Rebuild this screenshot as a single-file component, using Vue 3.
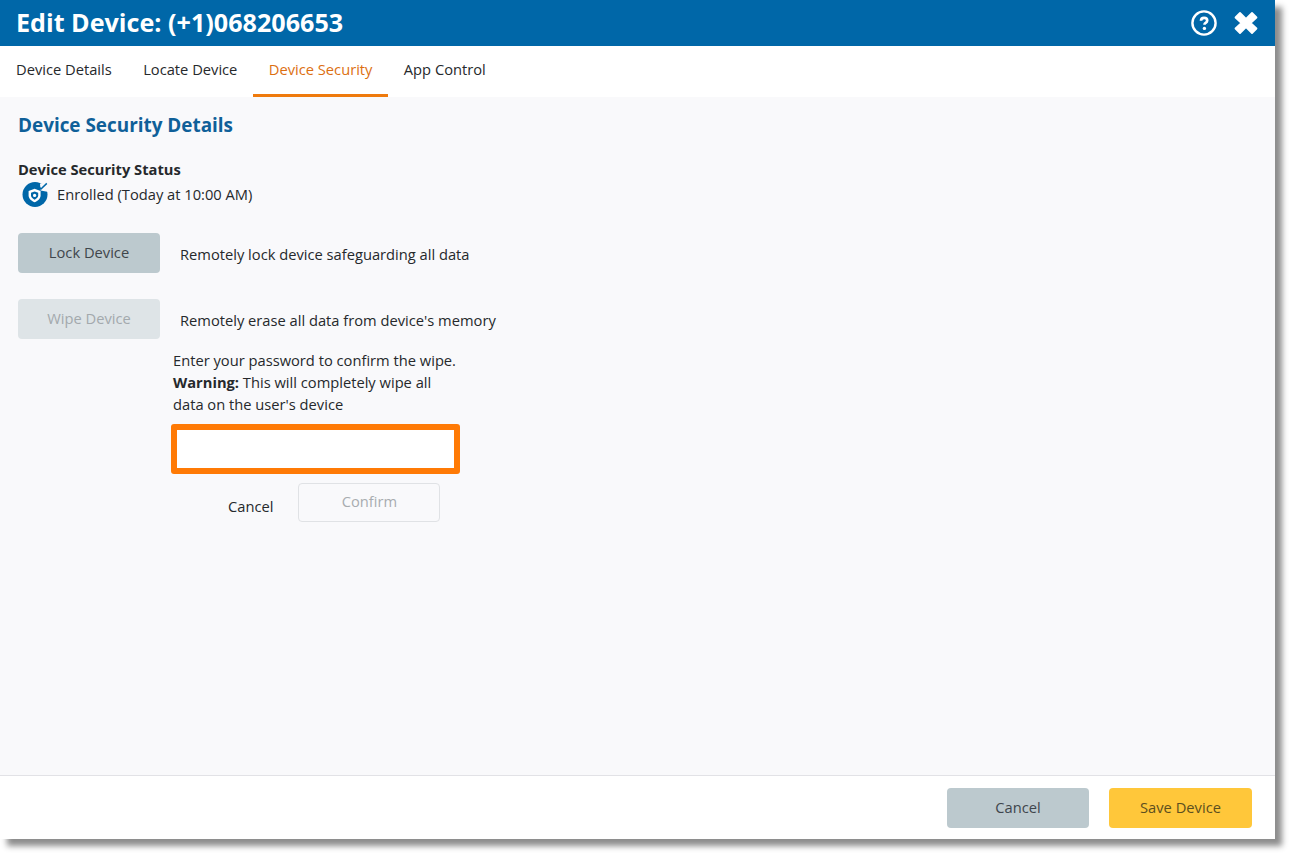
<script setup>
const tabs = [
  { label: 'Device Details' },
  { label: 'Locate Device' },
  { label: 'Device Security', active: true },
  { label: 'App Control' },
]
</script>

<template>
  <div class="page">
    <div class="modal">
      <header class="titlebar">
        <h1>Edit Device: (+1)068206653</h1>
        <div class="title-icons">
          <svg width="26" height="26" viewBox="0 0 26 26" aria-hidden="true">
            <circle cx="13" cy="13" r="11.600" fill="none" stroke="#fff" stroke-width="2.400" />
            <path d="M10 10.800c0-1.900 1.300-3 3.100-3s3.100 1 3.100 2.600c0 1.300-.8 1.900-1.600 2.500-.8.5-1.100.9-1.100 1.800" fill="none" stroke="#fff" stroke-width="2.700" />
            <circle cx="13.400" cy="18.400" r="1.700" fill="#fff" />
          </svg>
          <svg width="26" height="24" viewBox="0 0 26 24" aria-hidden="true">
            <path d="M2.500 6.500 7 2l6 6 6-6 4.500 4.500-6 5.500 6 5.500L19 22l-6-6-6 6-4.500-4.500 6-5.500z" fill="#fff" stroke="#fff" stroke-width="1.800" stroke-linejoin="round" />
          </svg>
        </div>
      </header>

      <nav class="tabs">
        <a v-for="t in tabs" :key="t.label" class="tab" :class="{ active: t.active }">{{ t.label }}</a>
      </nav>

      <main class="content">
        <h2>Device Security Details</h2>
        <div class="status-label">Device Security Status</div>
        <div class="status">
          <svg width="28" height="28" viewBox="0 0 28 28" aria-hidden="true">
            <circle cx="14" cy="14.500" r="12.500" fill="#0067a8" />
            <path d="M19 3.800 19.600 10.500 27.500 12 27.500 2z" fill="#f9f9fb" />
            <path d="M13.600 8.800 19.600 11v4.200c0 3.300-2.500 5.700-6 7.100-3.500-1.400-6-3.800-6-7.100V11z" fill="#fff" />
            <path d="M13.600 11.400 17.200 12.800v2.500c0 2-1.500 3.500-3.600 4.400-2.100-.9-3.600-2.400-3.600-4.400v-2.500z" fill="#0067a8" />
            <circle cx="13.600" cy="15.400" r="1.600" fill="#fff" />
            <path d="M17.600 6.600 20 9 25.800 3.400" fill="none" stroke="#0067a8" stroke-width="1.500" />
          </svg>
          <span>Enrolled (Today at 10:00 AM)</span>
        </div>

        <div class="action first">
          <button class="btn grey">Lock Device</button>
          <span class="desc">Remotely lock device safeguarding all data</span>
        </div>
        <div class="action second">
          <button class="btn grey-disabled">Wipe Device</button>
          <span class="desc">Remotely erase all data from device's memory</span>
        </div>

        <section class="confirm">
          <p>Enter your password to confirm the wipe.<br><b>Warning:</b> This will completely wipe all<br>data on the user's device</p>
          <input class="password" type="password" />
          <div class="confirm-actions">
            <span class="cancel-link">Cancel</span>
            <button class="btn confirm-btn">Confirm</button>
          </div>
        </section>
      </main>

      <footer class="footer">
        <button class="btn grey foot-cancel">Cancel</button>
        <button class="btn yellow foot-save">Save Device</button>
      </footer>
    </div>
  </div>
</template>

<style scoped>
.page {
  width: 1293px;
  height: 857px;
  overflow: hidden;
  background: #fff;
  font-family: "Open Sans", "Liberation Sans", sans-serif;
  font-size: 14.700px;
  color: #26292c;
}
.modal {
  width: 1275px;
  height: 839px;
  display: flex;
  flex-direction: column;
  background: #fff;
  box-shadow: 7px 7px 6px rgba(0, 0, 0, 0.45);
}
.titlebar {
  height: 46px;
  flex: none;
  background: #0067a8;
  color: #fff;
  display: flex;
  align-items: center;
  justify-content: space-between;
  padding: 0 16px;
}
h1 {
  margin: 0 0 2px;
  font-size: 25.150px;
  font-weight: 700;
  line-height: 44px;
}
.title-icons {
  display: flex;
  gap: 16px;
  align-items: center;
}
.tabs {
  height: 51px;
  flex: none;
  display: flex;
}
.tab {
  padding: 0 15.700px;
  line-height: 46px;
  height: 51px;
  box-sizing: border-box;
  white-space: nowrap;
}
.tab:first-child { padding-left: 16px; }
.tab.active {
  color: #dc6f11;
  border-bottom: 3px solid #ef7a0c;
}
.content {
  flex: 1;
  background: #f9f9fb;
  padding: 0 18px;
  border-bottom: 1px solid #e2e2e6;
}
h2 {
  margin: 15px 0 0;
  font-size: 18.900px;
  line-height: 26px;
  font-weight: 700;
  color: #0f6099;
}
.status-label {
  margin-top: 21px;
  font-weight: 700;
  line-height: 20px;
}
.status {
  display: flex;
  align-items: center;
  gap: 8px;
  height: 30px;
  margin-left: 3px;
}
.action {
  display: flex;
  align-items: center;
  gap: 20px;
}
.action.first { margin-top: 24px; }
.action.second { margin-top: 26px; }
.desc { position: relative; top: 1px; }
.btn {
  width: 142px;
  height: 40px;
  padding: 0 0 2px;
  border: 0;
  border-radius: 4px;
  font: inherit;
  box-sizing: border-box;
}
.grey { background: #bcc9ce; color: #3f464c; }
.grey-disabled { background: #dee4e7; color: #a3a9ad; }
.yellow { background: #ffc73a; color: #5c4f1f; }
.confirm {
  margin: 10px 0 0 155px;
  width: 290px;
}
.confirm p {
  margin: 0;
  line-height: 22px;
}
.password {
  display: block;
  box-sizing: border-box;
  width: 289px;
  height: 50px;
  margin: 9px 0 0 -2px;
  background: #fff;
  border: 6px solid #ff7a05;
  border-radius: 3px;
  outline: 0;
}
.confirm-actions {
  display: flex;
  margin-top: 9px;
  padding-left: 55px;
  gap: 25px;
}
.cancel-link {
  line-height: 20px;
  margin-top: 13px;
}
.confirm-btn {
  background: #f9f9fb;
  border: 1px solid #e0e2e5;
  color: #a8acb0;
  height: 39px;
  padding-bottom: 4px;
}
.footer {
  height: 63px;
  flex: none;
  background: #fff;
  display: flex;
  align-items: center;
  justify-content: flex-end;
  gap: 20px;
  padding-right: 23px;
}
.foot-cancel { width: 142px; }
.foot-save { width: 143px; }
</style>
